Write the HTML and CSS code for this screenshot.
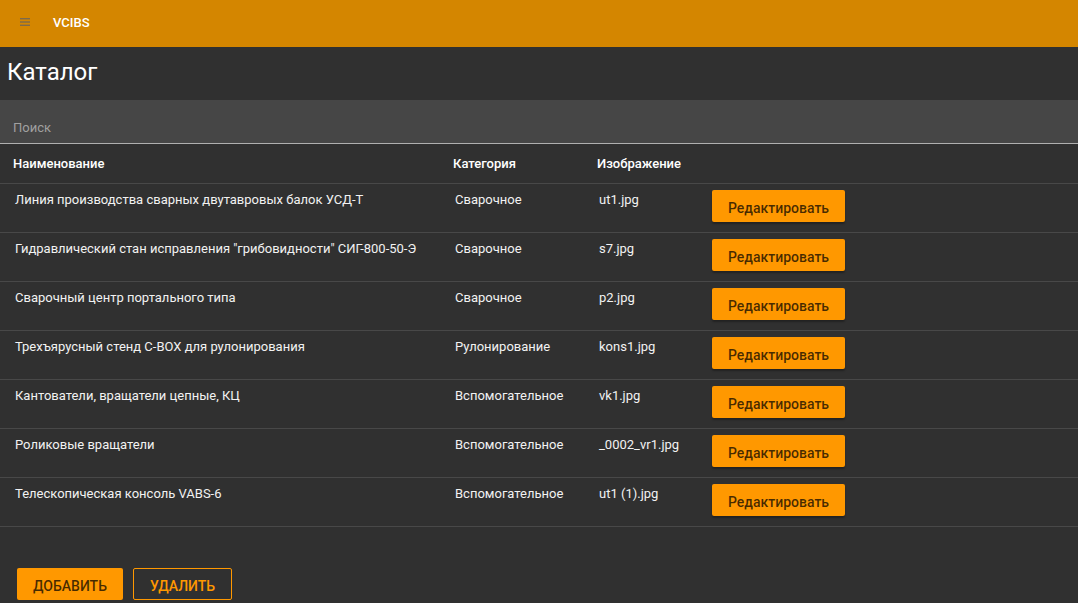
FILE: index.html
```html
<!DOCTYPE html>
<html lang="ru">
<head>
<meta charset="utf-8">
<title>VCIBS</title>
<link rel="stylesheet" href="styles.css">
</head>
<body>
<header class="toolbar">
  <span class="menu-btn">
    <svg width="12" height="10" viewBox="0 0 12 10"><rect x="1" y="1" width="10" height="1.4"/><rect x="1" y="4.3" width="10" height="1.4"/><rect x="1" y="7.6" width="10" height="1.4"/></svg>
  </span>
  <span class="brand">VCIBS</span>
</header>
<main>
  <h1 class="title">Каталог</h1>
  <div class="search"><span class="search-label">Поиск</span></div>
  <table class="grid">
    <thead>
      <tr><th class="c-name">Наименование</th><th class="c-cat">Категория</th><th class="c-img">Изображение</th><th></th></tr>
    </thead>
    <tbody>
      <tr><td>Линия производства сварных двутавровых балок УСД-Т</td><td>Сварочное</td><td>ut1.jpg</td><td><button class="edit">Редактировать</button></td></tr>
      <tr><td>Гидравлический стан исправления "грибовидности" СИГ-800-50-Э</td><td>Сварочное</td><td>s7.jpg</td><td><button class="edit">Редактировать</button></td></tr>
      <tr><td>Сварочный центр портального типа</td><td>Сварочное</td><td>p2.jpg</td><td><button class="edit">Редактировать</button></td></tr>
      <tr><td>Трехъярусный стенд C-BOX для рулонирования</td><td>Рулонирование</td><td>kons1.jpg</td><td><button class="edit">Редактировать</button></td></tr>
      <tr><td>Кантователи, вращатели цепные, КЦ</td><td>Вспомогательное</td><td>vk1.jpg</td><td><button class="edit">Редактировать</button></td></tr>
      <tr><td>Роликовые вращатели</td><td>Вспомогательное</td><td>_0002_vr1.jpg</td><td><button class="edit">Редактировать</button></td></tr>
      <tr><td>Телескопическая консоль VABS-6</td><td>Вспомогательное</td><td>ut1 (1).jpg</td><td><button class="edit">Редактировать</button></td></tr>
    </tbody>
  </table>
  <div class="actions">
    <button class="btn-add">ДОБАВИТЬ</button>
    <button class="btn-del">УДАЛИТЬ</button>
  </div>
</main>
</body>
</html>
```
FILE: styles.css
```css
html, body {
  margin: 0;
  padding: 0;
  background: #303030;
  font-family: Roboto, "Liberation Sans", sans-serif;
  color: #ffffff;
  height: 100%;
  overflow: hidden;
}
.toolbar {
  height: 47px;
  background: #d48600;
  display: flex;
  align-items: center;
  padding-left: 19px;
}
.menu-btn {
  display: flex;
  width: 12px;
  height: 10px;
  margin-top: -3px;
}
.menu-btn svg { fill: #7d6a4c; }
.brand {
  margin-left: 22px;
  font-size: 13px;
  font-weight: 500;
  color: #fff;
  margin-top: -3px;
}
.title {
  margin: 0;
  padding: 12px 8px 0 7px;
  height: 41px;
  font-size: 24px;
  font-weight: 400;
  line-height: 26px;
}
.search {
  height: 43px;
  background: #464646;
  border-bottom: 1px solid #b0b0b0;
  display: flex;
  align-items: flex-end;
  padding-left: 13px;
}
.search-label {
  font-size: 13px;
  color: #a0a0a0;
  padding-bottom: 8px;
}
.grid {
  width: 100%;
  border-collapse: collapse;
  font-size: 13px;
}
.grid th {
  text-align: left;
  font-weight: 500;
  height: 39px;
  padding: 0;
  vertical-align: middle;
  border-bottom: 1px solid #484848;
}
.grid th.c-name { width: 440px; padding-left: 13px; }
.grid th.c-cat { width: 144px; }
.grid th.c-img { width: 115px; }
.grid td {
  height: 49px;
  padding: 8px 0 0;
  vertical-align: top;
  border-bottom: 1px solid #484848;
  box-sizing: border-box;
  color: #f2f2f2;
}
.grid td:nth-child(1) { padding-left: 15px; }
.grid td:nth-child(2) { padding-left: 2px; }
.grid td:nth-child(3) { padding-left: 2px; }
.grid td:nth-child(4) { padding-top: 6px; }
.edit {
  width: 133px;
  height: 32px;
  border: none;
  border-radius: 2px;
  background: #ff9800;
  color: rgba(0, 0, 0, 0.72);
  font-family: Roboto, "Liberation Sans", sans-serif;
  font-size: 14px;
  font-weight: 500;
  padding: 3px 0 0;
  box-shadow: 0 2px 2px rgba(0,0,0,0.3);
}
.actions {
  display: flex;
  gap: 10px;
  padding: 41px 0 0 17px;
}
.btn-add, .btn-del {
  height: 32px;
  border-radius: 2px;
  font-family: Roboto, "Liberation Sans", sans-serif;
  font-size: 14px;
  font-weight: 500;
  padding: 3px 0 0;
}
.btn-add {
  width: 106px;
  background: #ff9800;
  border: none;
  color: rgba(0, 0, 0, 0.72);
}
.btn-del {
  width: 99px;
  background: transparent;
  border: 1px solid #ff9800;
  color: #ff9800;
}
```
